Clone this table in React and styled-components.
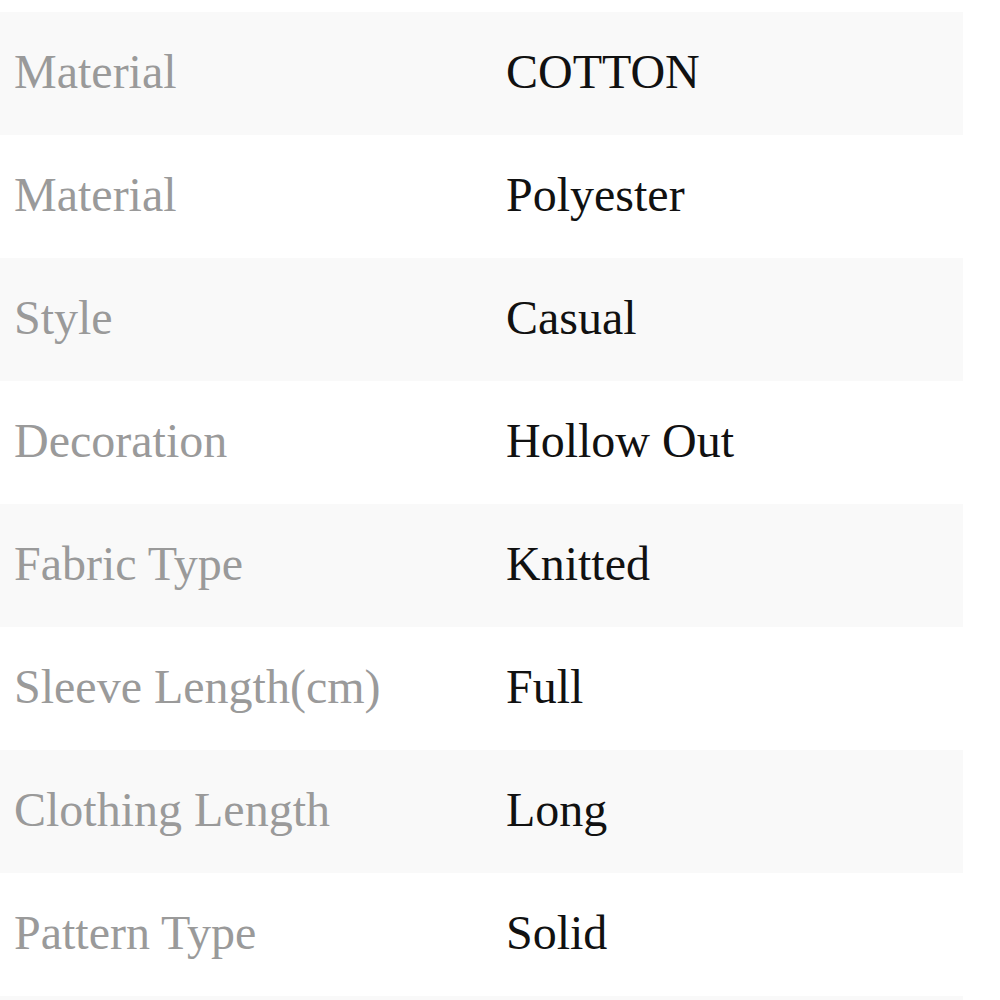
import React from "react";
import styled, { createGlobalStyle } from "styled-components";

const Global = createGlobalStyle`
  html, body { margin: 0; padding: 0; background: #ffffff; }
  body { font-family: "Liberation Serif", "Times New Roman", serif; }
`;

const Table = styled.div`
  width: 963px;
  padding-top: 12px;
  display: flex;
  flex-direction: column;
`;

const Row = styled.div`
  display: grid;
  grid-template-columns: 492px 1fr;
  align-items: center;
  height: 123px;
  padding: 0 0 5px 14px;
  box-sizing: border-box;
  background: ${(p) => (p.$shaded ? "#f9f9f9" : "#ffffff")};
`;

const Label = styled.span`
  font-size: 48px;
  color: #9a9a9a;
  white-space: nowrap;
`;

const Value = styled.span`
  font-size: 48px;
  color: #111111;
  white-space: nowrap;
`;

const rows = [
  ["Material", "COTTON"],
  ["Material", "Polyester"],
  ["Style", "Casual"],
  ["Decoration", "Hollow Out"],
  ["Fabric Type", "Knitted"],
  ["Sleeve Length(cm)", "Full"],
  ["Clothing Length", "Long"],
  ["Pattern Type", "Solid"],
];

export default function App() {
  return (
    <>
      <Global />
      <Table>
        {rows.map(([k, v], i) => (
          <Row key={i} $shaded={i % 2 === 0}>
            <Label>{k}</Label>
            <Value>{v}</Value>
          </Row>
        ))}
        <Row $shaded />
      </Table>
    </>
  );
}
